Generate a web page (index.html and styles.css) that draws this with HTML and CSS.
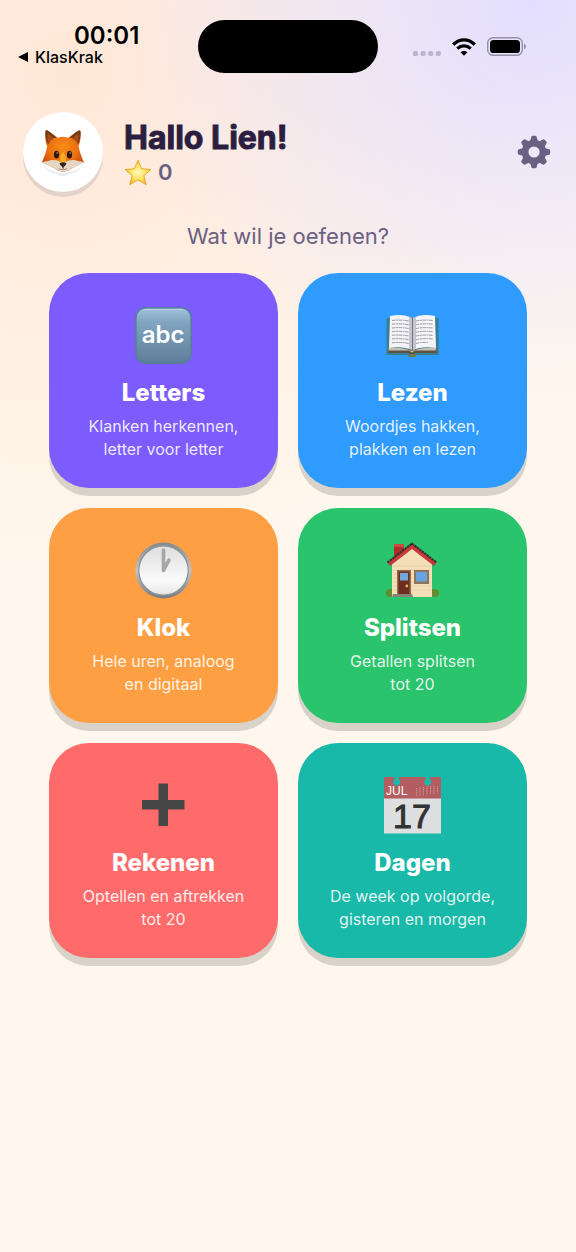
FILE: index.html
```
<!DOCTYPE html>
<html lang="nl">
<head>
    <meta charset="UTF-8">
    <meta name="viewport" content="width=device-width, initial-scale=1.0">
    <title>KlasKrak</title>
    <link rel="stylesheet" href="styles.css">
</head>
<body>

<!-- Status bar -->
<div class="status-bar">
    <div class="status-left">
        <div class="time">00:01</div>
        <a href="#" class="back-link">
            <svg width="10" height="10" viewBox="0 0 10 10"><path d="M0 5 10 0V10Z"/></svg>
            KlasKrak
        </a>
    </div>
    <div class="island"></div>
    <div class="status-right">
        <svg class="signal" width="28" height="5" viewBox="0 0 28 5" fill="#bcb5cd">
            <rect width="5" height="5" rx="1.5"/><rect x="7.6" width="5" height="5" rx="1.5"/>
            <rect x="15.2" width="5" height="5" rx="1.5"/><rect x="22.8" width="5" height="5" rx="1.5"/>
        </svg>
        <svg width="24" height="18" viewBox="0 0 24 18">
            <g fill="none" stroke="#000" stroke-width="3.2">
                <path d="M1.2 6.6C7.4.3 16.6.3 22.8 6.6"/>
                <path d="M5.3 10.7C9.2 7 14.8 7 18.7 10.7"/>
            </g>
            <path d="M8.5 14.2Q12 11.2 15.5 14.2L12 17.8Z"/>
        </svg>
        <svg width="39" height="19" viewBox="0 0 39 19">
            <rect x=".7" y=".7" width="34.6" height="17.6" rx="5.6" fill="none" stroke="#958fa8" stroke-width="1.4"/>
            <rect x="3" y="3" width="30" height="13" rx="3.6"/>
            <path d="M37 6.5Q39 7.3 39 9.5T37 12.5Z" fill="#958fa8"/>
        </svg>
    </div>
</div>

<!-- Profile -->
<header class="profile">
    <div class="avatar">
        <svg width="44" height="48" viewBox="0 0 136 148">
            <defs>
                <radialGradient id="fur" cx=".5" cy=".4" r=".6">
                    <stop offset="0" stop-color="#f98d18"/><stop offset=".6" stop-color="#ec6f10"/><stop offset="1" stop-color="#c4470b"/>
                </radialGradient>
            </defs>
            <path d="M6 118Q68 160 130 118Q112 138 88 142Q68 156 48 142Q20 138 6 118Z" fill="#e9edf2"/>
            <path d="M14 8Q17 5 24 10L52 30Q68 24 84 30L112 10Q120 5 122 10Q124 40 116 57Q120 76 130 101L134 106Q108 118 94 125Q79 135 68 135Q55 135 43 125Q26 117 2 106L6 99Q16 77 19 57Q11 40 14 8Z" fill="url(#fur)"/>
            <path d="M14 8Q17 5 24 10L48 29Q30 30 22 50Q12 32 14 8ZM122 9Q120 5 112 10L88 29Q106 30 114 50Q124 32 122 9Z" fill="#713915"/>
            <path d="M20 16Q33 23 39 34Q29 37 24 47Q18 34 20 16ZM116 16Q103 23 97 34Q107 37 112 47Q118 34 116 16Z" fill="#a84d18"/>
            <path d="M2 105Q20 103 33 99Q51 98 62 106H74Q85 98 103 99Q117 104 134 105Q115 118 94 125Q79 135 68 135T43 125Q25 119 2 105Z" fill="#e5d6c4"/>
            <path d="M68 74Q58 84 59 103Q63 109 68 109T77 103Q78 84 68 74Z" fill="#ffae21"/>
            <ellipse cx="48" cy="82" rx="8" ry="12" fill="#2a1713"/><ellipse cx="88" cy="82" rx="8" ry="12" fill="#2a1713"/>
            <circle cx="50" cy="77" r="2.5" fill="#bba89d"/><circle cx="90" cy="77" r="2.5" fill="#bba89d"/>
            <path d="M58 108Q68 104 78 108Q80 113 70 120V124Q68 126 66 124V120Q56 113 58 108Z" fill="#34251f"/>
            <path d="M55 126Q68 132 81 126" fill="none" stroke="#ab9078" stroke-width="3"/>
        </svg>
    </div>
    <div class="profile-text">
        <h1>Hallo Lien!</h1>
        <div class="stars">
            <svg width="28" height="27" viewBox="0 0 28 27">
                <defs>
                    <radialGradient id="star"><stop offset="0" stop-color="#fffbc5"/><stop offset=".6" stop-color="#ffe25d"/><stop offset="1" stop-color="#f5b929"/></radialGradient>
                </defs>
                <path d="M14 1.2 17.6 9.8 27 10.5 19.8 16.5 22.2 25.7 14 20.8 5.8 25.7 8.2 16.5 1 10.5 10.4 9.8Z" fill="url(#star)" stroke="#e7ab2c" stroke-linejoin="round"/>
            </svg>
            <span>0</span>
        </div>
    </div>
    <button class="settings" aria-label="Instellingen">
        <svg width="34" height="34" viewBox="-17 -17 34 34" fill="#6b6082">
            <defs><path id="tooth" d="M-3.8-11-2.7-15Q-2.4-16.2-1.2-16.2H1.2Q2.4-16.2 2.7-15L3.8-11Z"/></defs>
            <circle r="8.9" fill="none" stroke="#6b6082" stroke-width="6.6"/>
            <use href="#tooth"/><use href="#tooth" transform="rotate(45)"/>
            <use href="#tooth" transform="rotate(90)"/><use href="#tooth" transform="rotate(135)"/>
            <use href="#tooth" transform="rotate(180)"/><use href="#tooth" transform="rotate(225)"/>
            <use href="#tooth" transform="rotate(270)"/><use href="#tooth" transform="rotate(315)"/>
        </svg>
    </button>
</header>

<main>
    <p class="question">Wat wil je oefenen?</p>

    <div class="cards">
        <button class="card purple">
            <svg viewBox="0 0 57 57">
                <defs><linearGradient id="abc" x2="0" y2="1"><stop offset="0" stop-color="#a4c3db"/><stop offset=".25" stop-color="#82a5c1"/><stop offset="1" stop-color="#5e7d99"/></linearGradient></defs>
                <rect x=".8" y=".8" width="55.4" height="55.4" rx="10" fill="url(#abc)" stroke="#587c9f" stroke-width="1.6"/>
                <path d="M9 2.5H48" stroke="#b9d1e2" stroke-width="1.2" stroke-linecap="round"/>
                <text class="abc-text" x="28" y="36" text-anchor="middle">abc</text>
            </svg>
            <span class="title">Letters</span>
            <span class="text">Klanken herkennen,<br>letter voor letter</span>
        </button>

        <button class="card blue">
            <svg viewBox="0 0 57 57">
                <path d="M2.5 11H54.5V48H32Q31 50 27.5 50T24 48H2.5Z" fill="#397e91"/>
                <path d="M4 42H53V46H31L28 48 25 46H4Z" fill="#5b5245"/>
                <path d="M4.5 41Q18 40 28 44Q39 40 52 41V43.5H31L28 45.5 25 43.5H4.5Z" fill="#c7c0b3"/>
                <path d="M6 9Q19 6 28 11V43Q19 39 5 41Z" fill="#f3f2f7"/>
                <path d="M51 9Q38 6 29 11V43Q38 39 52 41Z" fill="#f5f4f8"/>
                <path d="M25 9.5Q27 10 28.5 12Q30 10 32 9.5V41L28.5 44 25 41Z" fill="#aaaab4" opacity=".65"/>
                <path d="M28.5 11V44" stroke="#737780"/>
                <path d="M8 13.5Q16 12.5 25 14M8 17.2Q16 16.2 25 17.8M8 21Q16 20 25 21.5M8 24.7Q16 23.7 25 25.2M8 28.4Q16 27.4 25 29M8 32Q16 31 25 32.7M8 35.8Q16 34.8 25 36.5M32 14Q39 12.5 49 13.5M32 17.8Q39 16.2 49 17.2M32 21.5Q39 20 49 21M32 25.2Q39 23.7 49 24.7M32 29Q39 27.4 49 28.4M32 32.7Q39 31 49 32M32 36.5Q37 35 44 35.5" fill="none" stroke="#9a9aa2" stroke-width="1" stroke-dasharray="3.5 .6 2 .5"/>
                <path d="M25.5 47H31.5V50H25.5Z" fill="#777a3b"/>
            </svg>
            <span class="title">Lezen</span>
            <span class="text">Woordjes hakken,<br>plakken en lezen</span>
        </button>

        <button class="card orange">
            <svg viewBox="0 0 57 57">
                <defs>
                    <linearGradient id="rim" x2="0" y2="1"><stop offset="0" stop-color="#80898f"/><stop offset=".5" stop-color="#c2c6c9"/><stop offset="1" stop-color="#747b81"/></linearGradient>
                    <linearGradient id="face" x2="0" y2="1"><stop offset="0" stop-color="#dedede"/><stop offset=".7" stop-color="#fbfbfb"/><stop offset="1" stop-color="#e5e5e5"/></linearGradient>
                </defs>
                <circle cx="28.5" cy="28.5" r="28" fill="url(#rim)"/>
                <circle cx="28.5" cy="28.5" r="24.7" fill="url(#face)" stroke="#8d9194" stroke-width="1.2"/>
                <path d="M28.5 8V28.5L34 18" fill="none" stroke="#a4a6a8" stroke-width="3.6" stroke-linecap="round" stroke-linejoin="round"/>
            </svg>
            <span class="title">Klok</span>
            <span class="text">Hele uren, analoog<br>en digitaal</span>
        </button>

        <button class="card green">
            <svg viewBox="0 0 57 57">
                <circle cx="6" cy="51" r="4" fill="#638b2f"/><circle cx="51" cy="51" r="4" fill="#638b2f"/>
                <path d="M10 2H20V16H10Z" fill="#af2e2c"/><path d="M10 2H20V5H10Z" fill="#c94b40"/>
                <path d="M8 20 28 5 48 20V55H8Z" fill="#f4dfb9"/>
                <path d="M9 24H47M9 28H47M9 32H47M9 36H47M9 40H47M9 44H47M9 48H47" stroke="#e4cba3" stroke-width=".7"/>
                <path d="M3.5 20.5 28 1.5 52.5 20.5 50 24 28 7 6 24Z" fill="#c63b37"/>
                <path d="M3.5 20.5 28 1.5 52.5 20.5" fill="none" stroke="#342d31" stroke-width="2" stroke-dasharray="2.5 .6"/>
                <path d="M13 28H27V53H13Z" fill="#916a4e"/><path d="M14.5 29.5H25.5V53H14.5Z" fill="#6b2e20"/>
                <path d="M16 31H24V38.5H16Z" fill="#74a7d7"/><circle cx="22.8" cy="44" r="1.4" fill="#e9b64d"/>
                <path d="M30 28H45V42H30Z" fill="#8d745b"/><path d="M32 30H43V39.5H32Z" fill="#67a3dc"/>
                <path d="M9 52H28L29 55H8Z" fill="#888178"/>
            </svg>
            <span class="title">Splitsen</span>
            <span class="text">Getallen splitsen<br>tot 20</span>
        </button>

        <button class="card red">
            <svg viewBox="0 0 57 57"><path d="M23.5 6.5H33V23H49.5V32.5H33V49H23.5V32.5H7V23H23.5Z" fill="#464646"/></svg>
            <span class="title">Rekenen</span>
            <span class="text">Optellen en aftrekken<br>tot 20</span>
        </button>

        <button class="card teal">
            <svg viewBox="0 0 57 57">
                <path d="M0 0H57V22H0Z" fill="#b45d60"/><path d="M0 21.5H57V56.5H0Z" fill="#dedfe1"/>
                <path d="M10.5 0H15V2.5A3.5 3.5 0 1 1 10.5 2.5ZM41.5 0H46V2.5A3.5 3.5 0 1 1 41.5 2.5Z" fill="#18b9a8"/>
                <path d="M32.5 11V19M36 10V19M39.5 10V19M43 9V17M46.5 9V17M50 9V17M53.5 9V16" stroke="#ce9193" stroke-width="1" stroke-dasharray="1.2 .6"/>
                <text class="month" x="2" y="18">JUL</text>
                <text class="day" x="28" y="51" text-anchor="middle">17</text>
            </svg>
            <span class="title">Dagen</span>
            <span class="text">De week op volgorde,<br>gisteren en morgen</span>
        </button>
    </div>
</main>

</body>
</html>
```
FILE: styles.css
```
* {
    margin: 0;
    padding: 0;
    box-sizing: border-box;
}

body {
    font-family: 'Inter', sans-serif;
    min-height: 100vh;
    background:
        radial-gradient(ellipse 420px 400px at 92% 0, #e3deff, rgba(227, 222, 255, 0)),
        radial-gradient(ellipse 480px 500px at 12% 6%, #ffe7d7, rgba(255, 231, 215, 0)),
        #fff7ed;
    color: #2b1e40;
}

svg {
    display: block;
    flex-shrink: 0;
}

button {
    border: none;
    background: none;
    font-family: inherit;
    cursor: pointer;
}

/* Status bar */
.status-bar {
    display: grid;
    grid-template-columns: 1fr 180px 1fr;
    padding-top: 20px;
    color: #000;
}

.status-left {
    padding-left: 18px;
}

.time {
    padding: 3px 0 0 56px;
    font-size: 24px;
    line-height: 26px;
    font-weight: 600;
}

.back-link {
    display: flex;
    align-items: center;
    gap: 7px;
    color: #000;
    font-size: 16px;
    line-height: 16px;
    font-weight: 500;
    text-decoration: none;
}

.island {
    height: 53px;
    border-radius: 27px;
    background: #000;
}

.status-right {
    display: flex;
    align-items: center;
    gap: 11px;
    padding-left: 35px;
}

.signal {
    margin-top: 13px;
}

/* Profile */
.profile {
    display: flex;
    align-items: center;
    padding: 39px 25px 0 23px;
}

.avatar {
    display: flex;
    align-items: center;
    justify-content: center;
    width: 80px;
    height: 80px;
    border-radius: 50%;
    background: #fff;
    box-shadow: 0 5px 0 #e3d3ca;
}

.profile-text {
    flex: 1;
    padding-left: 21px;
}

h1 {
    font-size: 32px;
    line-height: 40px;
    font-weight: 700;
    -webkit-text-stroke: 1px #2b1e40;
}

.stars {
    display: flex;
    align-items: center;
    gap: 6px;
    color: #6b6082;
    font-size: 22px;
    line-height: 28px;
    font-weight: 600;
}

/* Cards */
.question {
    padding: 28px 0 21px;
    color: #6b6082;
    font-size: 22px;
    line-height: 32px;
    text-align: center;
}

.cards {
    display: grid;
    grid-template-columns: 1fr 1fr;
    gap: 20px;
    padding: 0 49px 49px;
}

.card {
    display: flex;
    flex-direction: column;
    align-items: center;
    padding: 34px 16px 27px;
    border-radius: 40px;
    color: #fff;
    box-shadow: 0 8px 0 #d9d2c9;
}

.card svg {
    width: 57px;
    height: 57px;
}

.title {
    margin-top: 13px;
    font-size: 24px;
    line-height: 32px;
    font-weight: 800;
}

.text {
    margin-top: 6px;
    color: rgba(255, 255, 255, 0.88);
    font-size: 16px;
    line-height: 23px;
}

.abc-text {
    fill: #fff;
    font-size: 24px;
    font-weight: 600;
}

.month {
    fill: #fff;
    font-family: 'Liberation Sans', sans-serif;
    font-size: 12px;
}

.day {
    fill: #333;
    stroke: #333;
    font-family: 'Liberation Sans', sans-serif;
    font-size: 34px;
}

.purple { background: #7c5cff; }
.blue { background: #2f9bff; }
.orange { background: #ff9f43; }
.green { background: #2ac46c; }
.red { background: #ff6b6b; }
.teal { background: #18b9a8; }
```
